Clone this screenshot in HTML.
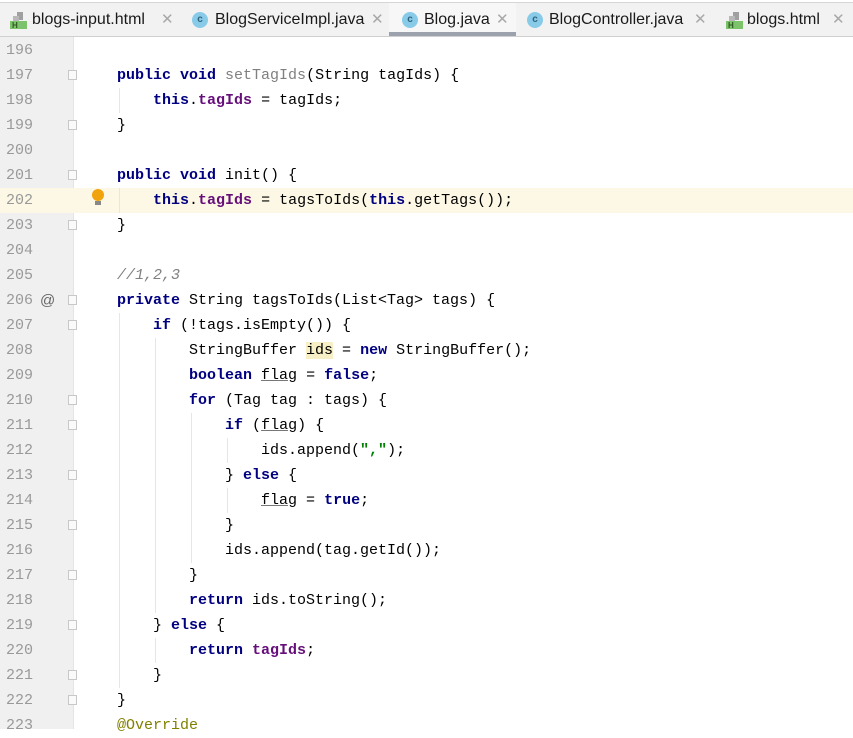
<!DOCTYPE html>
<html><head><meta charset="utf-8"><style>
body{margin:0;width:853px;height:729px;overflow:hidden;background:#fff;position:relative;font-family:"Liberation Sans",sans-serif}
#tabs{position:absolute;left:0;top:2px;width:853px;height:33px;background:#f2f2f2;border-top:1px solid #d6d6d6;border-bottom:1px solid #d0d0d0}
.tab{position:absolute;top:0;height:33px;font-size:16px;color:#1a1a1a;line-height:33px;white-space:nowrap}
.tab span{white-space:nowrap}
.tab .x{color:#a8a8a8;font-size:15px;position:absolute;top:0}
.ci{position:absolute;top:9px;width:16px;height:16px;border-radius:50%;background:#88cbe9;color:#31607a;font-size:10px;line-height:16px;text-align:center;font-weight:bold}
.hi{position:absolute;top:8px;width:18px;height:18px}
#gut{position:absolute;left:0;top:37px;width:73px;height:692px;background:#f0f0f0;border-right:1px solid #e4e4e4}
.ln{position:absolute;left:6px;font-family:"Liberation Mono",monospace;font-size:15px;color:#999;height:25px;line-height:25px}
.cd{position:absolute;left:117px;font-family:"Liberation Mono",monospace;font-size:15px;color:#000;white-space:pre;height:25px;line-height:25px}
.k{color:#000080;font-weight:bold}.f{color:#660e7a;font-weight:bold}.g{color:#808080}.c{color:#808080;font-style:italic}.s{color:#008000;font-weight:bold}.a{color:#808000}
.u{text-decoration:underline;text-decoration-color:#777}
.hl{background:#f7efc5}
.fm{position:absolute;left:68px;width:9px;height:10px;border:1px solid #c8c8c8;background:#fafafa;box-sizing:border-box}
.ig{position:absolute;width:1px;background:#e6e6e6}
</style></head><body>
<div id="tabs">
<div class="tab" style="left:0"><svg class="hi" style="left:9px" viewBox="0 0 18 18"><rect x="8" y="1" width="6" height="8" fill="#a0a0a0"/><rect x="4" y="5" width="6" height="5" fill="#b8b8b8"/><rect x="1" y="10" width="17" height="8" fill="#7dc36b"/><text x="3" y="17" font-size="8" font-family="Liberation Sans" fill="#2d5a20" font-weight="bold">H</text></svg><span style="position:absolute;left:32px">blogs-input.html</span><span class="x" style="left:161px">✕</span></div>
<div class="tab" style="left:0"><div class="ci" style="left:192px">c</div><span style="position:absolute;left:215px">BlogServiceImpl.java</span><span class="x" style="left:371px">✕</span></div>
<div style="position:absolute;left:389px;top:0;width:127px;height:33px;background:#f7f7f7;border-bottom:4px solid #9ba1ad;box-sizing:border-box"></div>
<div class="tab" style="left:0"><div class="ci" style="left:402px">c</div><span style="position:absolute;left:424px">Blog.java</span><span class="x" style="left:496px">✕</span></div>
<div class="tab" style="left:0"><div class="ci" style="left:527px">c</div><span style="position:absolute;left:549px">BlogController.java</span><span class="x" style="left:694px">✕</span></div>
<div class="tab" style="left:0"><svg class="hi" style="left:725px" viewBox="0 0 18 18"><rect x="8" y="1" width="6" height="8" fill="#a0a0a0"/><rect x="4" y="5" width="6" height="5" fill="#b8b8b8"/><rect x="1" y="10" width="17" height="8" fill="#7dc36b"/><text x="3" y="17" font-size="8" font-family="Liberation Sans" fill="#2d5a20" font-weight="bold">H</text></svg><span style="position:absolute;left:747px">blogs.html</span><span class="x" style="left:832px">✕</span></div>
</div>
<div id="gut"></div>
<div style="position:absolute;left:0;top:188px;width:853px;height:25px;background:#fcf8e5"></div>
<div style="position:absolute;left:91px;top:189px;width:14px;height:20px"><div style="position:absolute;left:1px;top:0;width:12px;height:12px;border-radius:50%;background:#f0a30a"></div><div style="position:absolute;left:4px;top:12px;width:6px;height:4px;background:#888"></div></div>
<div style="position:absolute;left:40px;top:288px;font-size:15px;color:#666;line-height:25px">@</div>

<div class="ig" style="left:119px;top:88px;height:25px"></div>
<div class="ig" style="left:119px;top:188px;height:25px"></div>
<div class="ig" style="left:119px;top:313px;height:375px"></div>
<div class="ig" style="left:155px;top:338px;height:275px"></div>
<div class="ig" style="left:155px;top:638px;height:25px"></div>
<div class="ig" style="left:191px;top:413px;height:150px"></div>
<div class="ig" style="left:227px;top:438px;height:25px"></div>
<div class="ig" style="left:227px;top:488px;height:25px"></div>

<div class="fm" style="top:70px"></div><div class="fm" style="top:120px"></div>
<div class="fm" style="top:170px"></div><div class="fm" style="top:220px"></div>
<div class="fm" style="top:295px"></div><div class="fm" style="top:320px"></div>
<div class="fm" style="top:395px"></div><div class="fm" style="top:420px"></div>
<div class="fm" style="top:470px"></div><div class="fm" style="top:520px"></div>
<div class="fm" style="top:570px"></div><div class="fm" style="top:620px"></div>
<div class="fm" style="top:670px"></div><div class="fm" style="top:695px"></div>

<div class="ln" style="top:38px">196</div>
<div class="ln" style="top:63px">197</div><div class="cd" style="top:63px"><span class="k">public void</span> <span class="g">setTagIds</span>(String tagIds) {</div>
<div class="ln" style="top:88px">198</div><div class="cd" style="top:88px">    <span class="k">this</span>.<span class="f">tagIds</span> = tagIds;</div>
<div class="ln" style="top:113px">199</div><div class="cd" style="top:113px">}</div>
<div class="ln" style="top:138px">200</div>
<div class="ln" style="top:163px">201</div><div class="cd" style="top:163px"><span class="k">public void</span> init() {</div>
<div class="ln" style="top:188px">202</div><div class="cd" style="top:188px">    <span class="k">this</span>.<span class="f">tagIds</span> = tagsToIds(<span class="k">this</span>.getTags());</div>
<div class="ln" style="top:213px">203</div><div class="cd" style="top:213px">}</div>
<div class="ln" style="top:238px">204</div>
<div class="ln" style="top:263px">205</div><div class="cd" style="top:263px"><span class="c">//1,2,3</span></div>
<div class="ln" style="top:288px">206</div><div class="cd" style="top:288px"><span class="k">private</span> String tagsToIds(List&lt;Tag&gt; tags) {</div>
<div class="ln" style="top:313px">207</div><div class="cd" style="top:313px">    <span class="k">if</span> (!tags.isEmpty()) {</div>
<div class="ln" style="top:338px">208</div><div class="cd" style="top:338px">        StringBuffer <span class="hl">ids</span> = <span class="k">new</span> StringBuffer();</div>
<div class="ln" style="top:363px">209</div><div class="cd" style="top:363px">        <span class="k">boolean</span> <span class="u">flag</span> = <span class="k">false</span>;</div>
<div class="ln" style="top:388px">210</div><div class="cd" style="top:388px">        <span class="k">for</span> (Tag tag : tags) {</div>
<div class="ln" style="top:413px">211</div><div class="cd" style="top:413px">            <span class="k">if</span> (<span class="u">flag</span>) {</div>
<div class="ln" style="top:438px">212</div><div class="cd" style="top:438px">                ids.append(<span class="s">","</span>);</div>
<div class="ln" style="top:463px">213</div><div class="cd" style="top:463px">            } <span class="k">else</span> {</div>
<div class="ln" style="top:488px">214</div><div class="cd" style="top:488px">                <span class="u">flag</span> = <span class="k">true</span>;</div>
<div class="ln" style="top:513px">215</div><div class="cd" style="top:513px">            }</div>
<div class="ln" style="top:538px">216</div><div class="cd" style="top:538px">            ids.append(tag.getId());</div>
<div class="ln" style="top:563px">217</div><div class="cd" style="top:563px">        }</div>
<div class="ln" style="top:588px">218</div><div class="cd" style="top:588px">        <span class="k">return</span> ids.toString();</div>
<div class="ln" style="top:613px">219</div><div class="cd" style="top:613px">    } <span class="k">else</span> {</div>
<div class="ln" style="top:638px">220</div><div class="cd" style="top:638px">        <span class="k">return</span> <span class="f">tagIds</span>;</div>
<div class="ln" style="top:663px">221</div><div class="cd" style="top:663px">    }</div>
<div class="ln" style="top:688px">222</div><div class="cd" style="top:688px">}</div>
<div class="ln" style="top:713px">223</div><div class="cd" style="top:713px"><span class="a">@Override</span></div>
</body></html>
